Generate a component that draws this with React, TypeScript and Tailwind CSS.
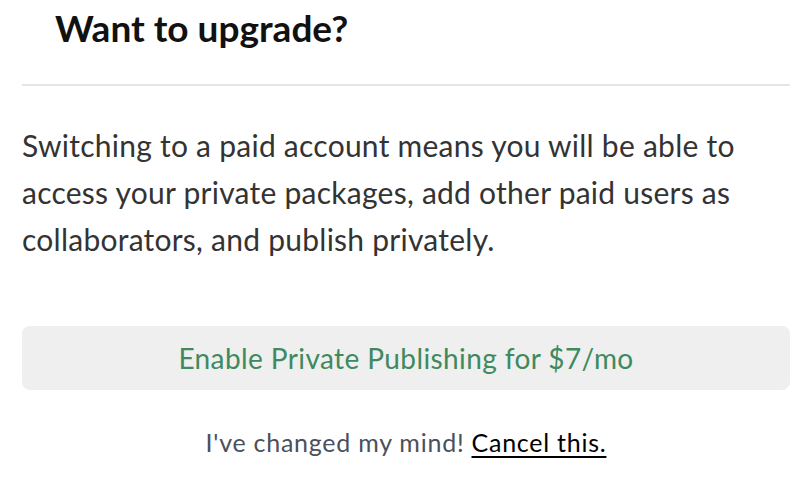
export default function App() {
  return (
    <div className="w-[808px] h-[500px] bg-white pl-[22px] pr-[18px] font-['Lato','Source_Sans_Pro',sans-serif] overflow-hidden">
      <h2 className="pl-[33px] pt-[8px] h-[84px] text-[37px] leading-[40px] font-bold text-[#111]">
        Want to upgrade?
      </h2>
      <div className="border-t-2 border-[#e5e5e5]" />
      <p className="mt-[36px] text-[30px] leading-[47px] tracking-[0.25px] text-[#333]">
        Switching to a paid account means you will be able to access your
        private packages, add other paid users as collaborators, and publish
        privately.
      </p>
      <button className="mt-[63px] w-full h-[64px] rounded-lg bg-[#efefef] text-[#3e8a5e] text-[28px] tracking-[0.4px] cursor-pointer">
        Enable Private Publishing for $7/mo
      </button>
      <p className="mt-[36px] text-center text-[25px] leading-[32px] tracking-[0.75px] text-[#4b505b]">
        I've changed my mind!{" "}
        <a href="#" className="text-black underline underline-offset-4">
          Cancel this.
        </a>
      </p>
    </div>
  );
}
